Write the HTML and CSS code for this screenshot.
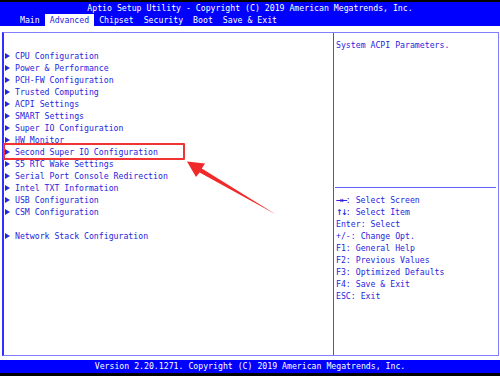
FILE: index.html
```html
<!DOCTYPE html>
<html>
<head>
  <link rel="stylesheet" href="styles.css">
</head>
<body>
  <div class="screen">
    <div class="top-strip"></div>
    <div class="header">
      <div class="title">Aptio Setup Utility - Copyright (C) 2019 American Megatrends, Inc.</div>
      <div class="tabs">
        <span class="tab">Main</span>
        <span class="tab active">Advanced</span>
        <span class="tab">Chipset</span>
        <span class="tab">Security</span>
        <span class="tab">Boot</span>
        <span class="tab">Save &amp; Exit</span>
      </div>
    </div>

    <div class="main">
      <div class="menu">
        <div class="item">CPU Configuration</div>
        <div class="item">Power &amp; Performance</div>
        <div class="item">PCH-FW Configuration</div>
        <div class="item">Trusted Computing</div>
        <div class="item">ACPI Settings</div>
        <div class="item">SMART Settings</div>
        <div class="item">Super IO Configuration</div>
        <div class="item">HW Monitor</div>
        <div class="item">Second Super IO Configuration</div>
        <div class="item">S5 RTC Wake Settings</div>
        <div class="item">Serial Port Console Redirection</div>
        <div class="item">Intel TXT Information</div>
        <div class="item">USB Configuration</div>
        <div class="item">CSM Configuration</div>
        <div class="spacer"></div>
        <div class="item">Network Stack Configuration</div>
      </div>
      <div class="side">
        <div class="desc">System ACPI Parameters.</div>
        <div class="rule"></div>
        <div class="help">
          <div class="help-line"><span class="keys">→←</span>: Select Screen</div>
          <div class="help-line"><span class="keys">↑↓</span>: Select Item</div>
          <div class="help-line">Enter: Select</div>
          <div class="help-line">+/-: Change Opt.</div>
          <div class="help-line">F1: General Help</div>
          <div class="help-line">F2: Previous Values</div>
          <div class="help-line">F3: Optimized Defaults</div>
          <div class="help-line">F4: Save &amp; Exit</div>
          <div class="help-line">ESC: Exit</div>
        </div>
      </div>
    </div>

    <div class="footer">Version 2.20.1271. Copyright (C) 2019 American Megatrends, Inc.</div>
    <div class="bottom-strip"></div>

    <!-- annotation drawn over the screenshot -->
    <div class="mark"></div>
    <svg class="pointer" width="500" height="376" viewBox="0 0 500 376">
      <polygon points="187,161.5 205,163.5 201.8,168.6 276,214.5 199.6,172.6 196,177" fill="#f02a2a"/>
    </svg>
  </div>
</body>
</html>
```

FILE: styles.css
```css
body {
  margin: 0;
  background: #fff;
  font-family: "DejaVu Sans Mono", "Liberation Mono", monospace;
  font-size: 8.2px;
  line-height: 12px;
  color: #2626dc;
}

.screen {
  position: relative;
  width: 500px;
  height: 376px;
  overflow: hidden;
  display: flex;
  flex-direction: column;
}

.top-strip {
  height: 2px;
  background: #000;
}

.header {
  background: #0000ff;
  color: #fff;
  height: 24px;
}

.title {
  text-align: center;
  height: 12px;
}

.tabs {
  display: flex;
  padding-left: 15px;
  height: 12px;
}

.tab {
  padding: 0 5px;
}

.tab.active {
  background: #fff;
  color: #2626dc;
}

.main {
  display: flex;
  margin: 6px 1px 0 2px;
  height: 322px;
  border: 1px solid #8080ff;
  border-left: 2px solid #3030ff;
}

.menu {
  width: 329px;
  border-right: 1px solid #4848ff;
  padding-top: 17px;
}

.item {
  display: flex;
  align-items: center;
  height: 12px;
  padding-left: 1px;
  white-space: nowrap;
}

.item::before {
  content: '';
  width: 0;
  height: 0;
  border-left: 5px solid #2626dc;
  border-top: 3px solid transparent;
  border-bottom: 3px solid transparent;
  margin-right: 5px;
}

.spacer {
  height: 12px;
}

.side {
  flex: 1;
  display: flex;
  flex-direction: column;
}

.desc {
  height: 148px;
  padding: 6px 0 0 2px;
}

.rule {
  height: 1px;
  margin: 0 2px 0 1px;
  background: #6060ff;
}

.help {
  padding: 6px 0 0 2px;
}

.help-line {
  height: 12px;
  white-space: nowrap;
}

.keys {
  font-family: "DejaVu Sans", sans-serif;
  font-weight: bold;
  letter-spacing: -1.8px;
  font-size: 8px;
  line-height: 0;
}

.footer {
  margin-top: 4px;
  height: 13px;
  line-height: 13px;
  background: #0000ff;
  color: #fff;
  text-align: center;
}

.bottom-strip {
  flex: 1;
  background: #000;
}

.mark {
  position: absolute;
  left: 3px;
  top: 143px;
  width: 178px;
  height: 13px;
  border: 2px solid #f03434;
  border-radius: 1px;
}

.pointer {
  position: absolute;
  left: 0;
  top: 0;
}
```
